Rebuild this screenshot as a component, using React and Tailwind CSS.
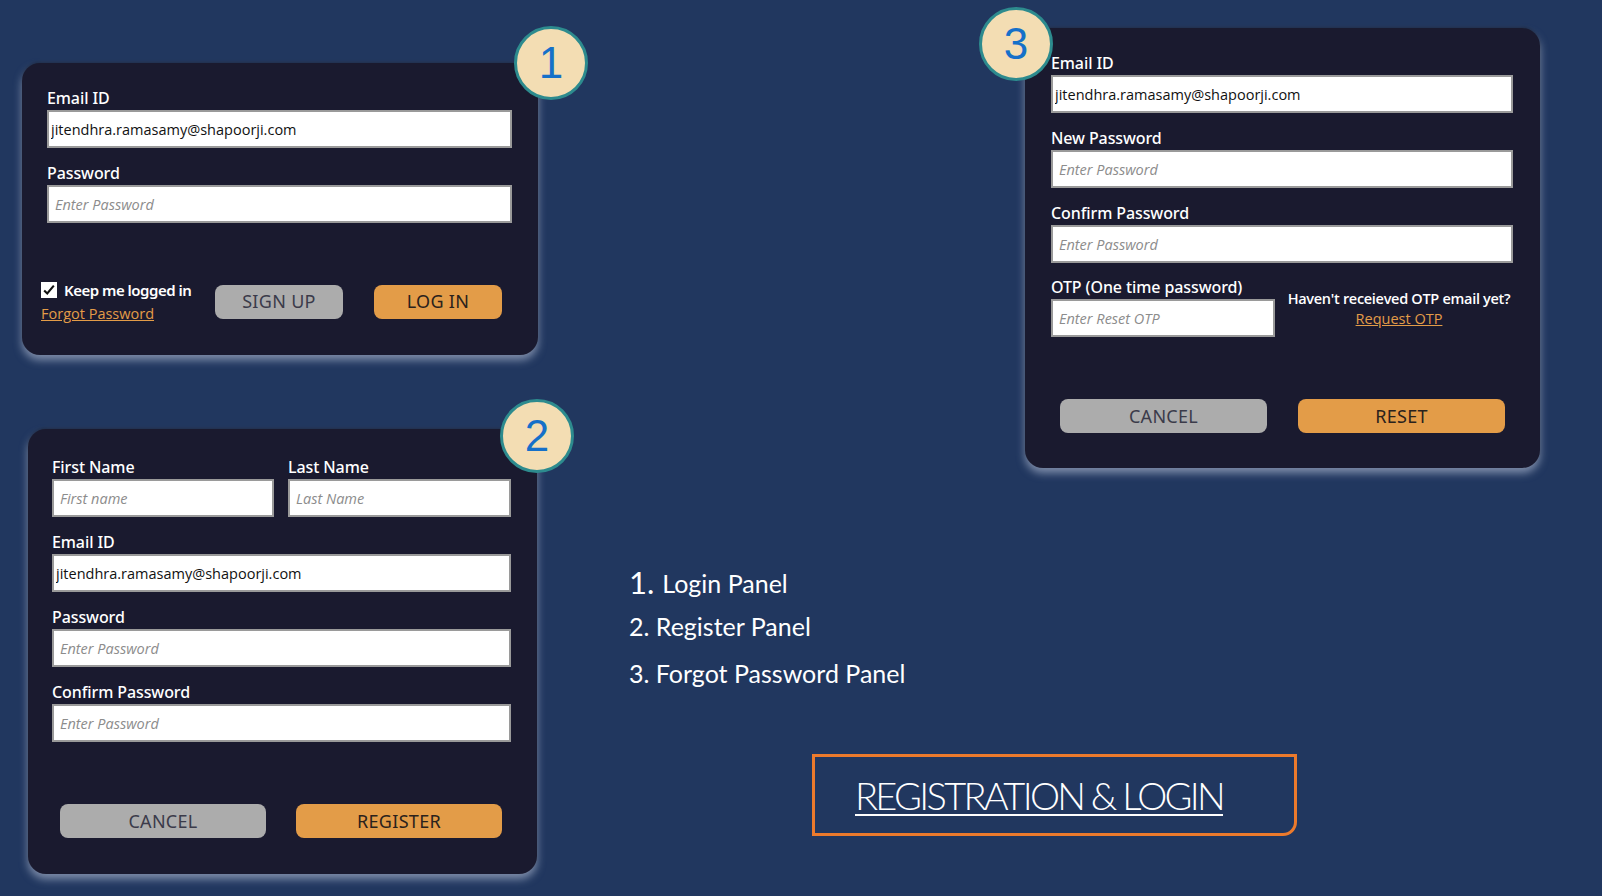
import React from 'react';

const labelCls = "block text-[16px] leading-[20px] font-medium text-white tracking-[-0.1px] [font-family:'Noto_Sans',sans-serif]";
const inputCls = "w-full h-[38px] bg-white border-2 border-[#9a9a9a] text-[14.5px] text-[#111] outline-none placeholder:italic placeholder:text-[#8c8c8c] [font-family:'Open_Sans',sans-serif]";
const panelCls = "relative bg-[#1a1a2f] rounded-[18px] shadow-[0_5px_9px_rgba(205,215,235,0.55),0_-1px_3px_rgba(0,0,0,0.35)]";
const btnCls = "h-[34px] rounded-[8px] text-[18px] tracking-[0.3px] [font-family:'Noto_Sans',sans-serif]";

function Badge({ n, className }) {
  return (
    <div className={`absolute w-[74px] h-[74px] rounded-full bg-[#f3ddb3] border-[3px] border-[#2d8b8e] flex items-center justify-center text-[44px] text-[#1570c9] [font-family:'Liberation_Sans',sans-serif] ${className}`}>
      {n}
    </div>
  );
}

function Field({ label, value, placeholder, className = '' }) {
  return (
    <div className={className}>
      <label className={labelCls}>{label}</label>
      <input
        className={`${inputCls} mt-[2px] ${value ? 'pl-[2px]' : 'pl-[6px]'}`}
        defaultValue={value}
        placeholder={placeholder}
      />
    </div>
  );
}

function LoginPanel() {
  return (
    <div className={`${panelCls} w-[516px] h-[292px] pt-[25px] pl-[25px] pr-[26px]`}>
      <Badge n="1" className="left-[492px] top-[-37px]" />
      <Field label="Email ID" value="jitendhra.ramasamy@shapoorji.com" />
      <Field label="Password" placeholder="Enter Password" className="mt-[15px]" />

      {/* bottom row */}
      <div className="flex items-center mt-[56px] -ml-[6px]">
        <div className="w-[170px]">
          <div className="flex items-center gap-[7px]">
            <span className="w-[16px] h-[16px] bg-white flex items-center justify-center">
              <svg viewBox="0 0 16 16" className="w-[14px] h-[14px]">
                <path d="M2.5 8.5 L6 12 L13.5 3" fill="none" stroke="#111" strokeWidth="2.4" />
              </svg>
            </span>
            <span className="text-[15px] font-semibold text-white tracking-[-0.5px] [font-family:'Noto_Sans',sans-serif]">Keep me logged in</span>
          </div>
          <a className="block mt-[1px] text-[14.5px] text-[#e39c48] underline [font-family:'Open_Sans',sans-serif]">Forgot Password</a>
        </div>
        <button className={`${btnCls} w-[128px] ml-[4px] bg-[#acacac] text-[#3b3b4a]`}>SIGN UP</button>
        <button className={`${btnCls} w-[128px] ml-[31px] bg-[#e39c48] text-[#2a221c]`}>LOG IN</button>
      </div>
    </div>
  );
}

function RegisterPanel() {
  return (
    <div className={`${panelCls} w-[509px] h-[445px] ml-[6px] mt-[74px] pt-[28px] pl-[24px] pr-[26px]`}>
      <Badge n="2" className="left-[472px] top-[-30px]" />
      <div className="flex gap-[14px]">
        <Field label="First Name" placeholder="First name" className="w-[222px]" />
        <Field label="Last Name" placeholder="Last Name" className="flex-1" />
      </div>
      <Field label="Email ID" value="jitendhra.ramasamy@shapoorji.com" className="mt-[15px]" />
      <Field label="Password" placeholder="Enter Password" className="mt-[15px]" />
      <Field label="Confirm Password" placeholder="Enter Password" className="mt-[15px]" />
      <div className="flex gap-[30px] mt-[62px] pl-[8px]">
        <button className={`${btnCls} w-[206px] bg-[#acacac] text-[#3b3b4a]`}>CANCEL</button>
        <button className={`${btnCls} w-[206px] bg-[#e39c48] text-[#2a221c]`}>REGISTER</button>
      </div>
    </div>
  );
}

function ForgotPanel() {
  return (
    <div className={`${panelCls} w-[515px] h-[440px] ml-[487px] pt-[25px] pl-[26px] pr-[27px]`}>
      <Badge n="3" className="left-[-46px] top-[-21px]" />
      <Field label="Email ID" value="jitendhra.ramasamy@shapoorji.com" />
      <Field label="New Password" placeholder="Enter Password" className="mt-[15px]" />
      <Field label="Confirm Password" placeholder="Enter Password" className="mt-[15px]" />
      <div className="flex mt-[14px]">
        <Field label="OTP (One time password)" placeholder="Enter Reset OTP" className="w-[224px]" />
        <div className="flex-1 pl-[10px] pt-[12px] text-center [font-family:'Open_Sans',sans-serif]">
          <div className="text-[14.5px] font-semibold text-white tracking-[-0.3px] leading-[19px]">Haven't receieved OTP email yet?</div>
          <a className="block text-[14.5px] text-[#e39c48] underline leading-[20px] mt-[1px]">Request OTP</a>
        </div>
      </div>
      <div className="flex gap-[31px] mt-[62px] pl-[9px]">
        <button className={`${btnCls} w-[207px] bg-[#acacac] text-[#3b3b4a]`}>CANCEL</button>
        <button className={`${btnCls} w-[207px] bg-[#e39c48] text-[#2a221c]`}>RESET</button>
      </div>
    </div>
  );
}

export default function App() {
  return (
    <div className="w-[1602px] h-[896px] bg-[#21375f] flex overflow-hidden">
      {/* Left column */}
      <div className="pl-[22px] pt-[63px]">
        <LoginPanel />
        <RegisterPanel />
      </div>

      {/* Right area */}
      <div className="flex-1 pt-[28px]">
        <ForgotPanel />

        {/* Legend */}
        <div className="ml-[91px] mt-[88px] text-white [font-family:'Lato',sans-serif] text-[25px]">
          <div className="h-[42px] flex items-end"><span className="text-[31px] leading-none mr-[8px]">1.</span><span className="leading-[30px]">Login Panel</span></div>
          <div className="mt-[10px]">2. Register Panel</div>
          <div className="mt-[9px]">3. Forgot Password Panel</div>
        </div>

        {/* Title box */}
        <div className="ml-[274px] mt-[62px] w-[485px] h-[82px] border-[3px] border-[#ec7a2c] rounded-br-[14px] flex items-center pl-[40px]">
          <span className="text-white underline underline-offset-[4px] decoration-[2px] text-[38px] font-light tracking-[-2.7px] [font-family:'Lato',sans-serif]">
            REGISTRATION &amp; LOGIN
          </span>
        </div>
      </div>
    </div>
  );
}
